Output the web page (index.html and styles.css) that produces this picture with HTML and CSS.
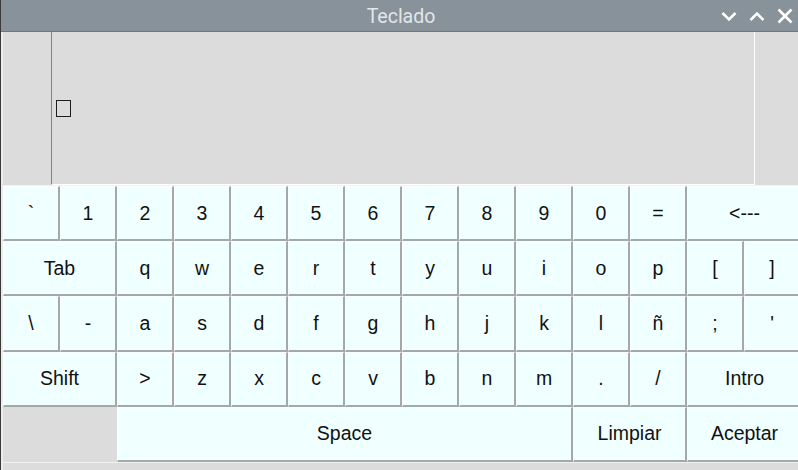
FILE: index.html
```html
<!DOCTYPE html>
<html lang="es">
<head>
<meta charset="utf-8">
<title>Teclado</title>
<link rel="stylesheet" href="styles.css">
</head>
<body>
<div class="window">
  <header class="titlebar">
    <div class="tb-side"></div>
    <div class="tb-title">Teclado</div>
    <div class="tb-controls">
      <svg class="ctl" viewBox="0 0 16 16" width="16" height="16"><polyline points="1.5,5 8,11.5 14.5,5" fill="none" stroke="#fff" stroke-width="2.6"/></svg>
      <svg class="ctl" viewBox="0 0 16 16" width="16" height="16"><polyline points="1.5,12 8,5.5 14.5,12" fill="none" stroke="#fff" stroke-width="2.6"/></svg>
      <svg class="ctl" viewBox="0 0 16 16" width="16" height="16"><path d="M1.5,1.5 L14.5,14.5 M14.5,1.5 L1.5,14.5" fill="none" stroke="#fff" stroke-width="2.6"/></svg>
    </div>
  </header>
  <div class="content">
    <div class="top">
      <div class="spacer-left"></div>
      <div class="entry"><span class="cursor"></span></div>
      <div class="spacer-right"></div>
    </div>
    <div class="keyboard">
      <button class="key">`</button>
      <button class="key">1</button>
      <button class="key">2</button>
      <button class="key">3</button>
      <button class="key">4</button>
      <button class="key">5</button>
      <button class="key">6</button>
      <button class="key">7</button>
      <button class="key">8</button>
      <button class="key">9</button>
      <button class="key">0</button>
      <button class="key">=</button>
      <button class="key span2 last">&lt;---</button>

      <button class="key span2">Tab</button>
      <button class="key">q</button>
      <button class="key">w</button>
      <button class="key">e</button>
      <button class="key">r</button>
      <button class="key">t</button>
      <button class="key">y</button>
      <button class="key">u</button>
      <button class="key">i</button>
      <button class="key">o</button>
      <button class="key">p</button>
      <button class="key">[</button>
      <button class="key">]</button>

      <button class="key">\</button>
      <button class="key">-</button>
      <button class="key">a</button>
      <button class="key">s</button>
      <button class="key">d</button>
      <button class="key">f</button>
      <button class="key">g</button>
      <button class="key">h</button>
      <button class="key">j</button>
      <button class="key">k</button>
      <button class="key">l</button>
      <button class="key">ñ</button>
      <button class="key">;</button>
      <button class="key">'</button>

      <button class="key span2">Shift</button>
      <button class="key">&gt;</button>
      <button class="key">z</button>
      <button class="key">x</button>
      <button class="key">c</button>
      <button class="key">v</button>
      <button class="key">b</button>
      <button class="key">n</button>
      <button class="key">m</button>
      <button class="key">.</button>
      <button class="key">/</button>
      <button class="key span2 last">Intro</button>

      <div class="empty span2"></div>
      <button class="key span8">Space</button>
      <button class="key span2">Limpiar</button>
      <button class="key span2 last">Aceptar</button>
    </div>
  </div>
</div>
</body>
</html>
```

FILE: styles.css
```css
html, body {
  margin: 0;
  padding: 0;
}
body {
  width: 798px;
  height: 470px;
  overflow: hidden;
  background: #dcdcdc;
  font-family: "Liberation Sans", Arial, sans-serif;
}
.window {
  width: 798px;
  height: 470px;
  display: flex;
  flex-direction: column;
  box-sizing: border-box;
  border-left: 1px solid #3a3a3a;
  background: #dcdcdc;
  overflow: hidden;
}
.titlebar {
  height: 31px;
  flex: 0 0 31px;
  background: #87929a;
  border-bottom: 1px solid #6e777d;
  display: grid;
  grid-template-columns: 1fr auto 1fr;
  align-items: center;
  margin-left: -1px;
}
.tb-title {
  font-family: Roboto, "Open Sans", sans-serif;
  font-size: 19.5px;
  color: #e4e6e8;
  padding-left: 4px;
  padding-top: 1px;
}
.tb-controls {
  display: flex;
  justify-content: flex-end;
  align-items: center;
  gap: 12px;
  padding-right: 5px;
}
.ctl {
  display: block;
}
.content {
  flex: 1;
  display: flex;
  flex-direction: column;
  border-left: 2px solid #ececec;
  overflow: hidden;
}
.top {
  height: 153px;
  flex: 0 0 153px;
  display: flex;
  border-bottom: 1px solid #f2f2f2;
}
.spacer-left {
  width: 48px;
  flex: 0 0 48px;
}
.entry {
  width: 704px;
  flex: 0 0 704px;
  box-sizing: border-box;
  border-left: 1px solid #7f7f7f;
  border-right: 1px solid #ffffff;
  border-bottom: 1px solid #ffffff;
  display: flex;
  align-items: center;
  padding-left: 4px;
  padding-top: 1px;
}
.cursor {
  display: block;
  width: 13px;
  height: 15px;
  border: 1.5px solid #1e1e1e;
}
.spacer-right {
  flex: 1;
}
.keyboard {
  height: 276px;
  flex: 0 0 276px;
  width: 798px;
  display: grid;
  grid-template-columns: repeat(14, 57px);
  grid-template-rows: repeat(5, 1fr);
  border-bottom: 1px solid #f0f0f0;
}
.key {
  margin: 0;
  padding: 0;
  background: #f0ffff;
  border-style: solid;
  border-width: 1px 2px 2px 1px;
  border-color: #fafefe #a3a9a9 #a3a9a9 #fafefe;
  font-family: "Liberation Sans", Arial, sans-serif;
  font-size: 19.5px;
  color: #111;
  display: flex;
  align-items: center;
  justify-content: center;
  box-sizing: border-box;
}
.key.last {
  padding-left: 2px;
}
.span2 {
  grid-column: span 2;
}
.span8 {
  grid-column: span 8;
}
.empty {
  background: #dcdcdc;
}
```
